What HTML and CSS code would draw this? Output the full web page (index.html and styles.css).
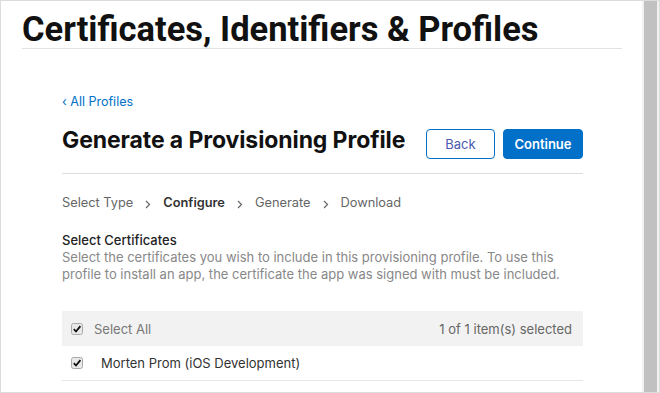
FILE: index.html
```html
<!DOCTYPE html>
<html>
<head>
<meta charset="utf-8">
<link rel="stylesheet" href="styles.css">
</head>
<body>
<div class="frame">
  <div class="page">
    <header class="top">
      <h1 class="title">Certificates, Identifiers &amp; Profiles</h1>
    </header>
    <main class="content">
      <a class="backlink" href="#">&lsaquo; All Profiles</a>
      <div class="titlebar">
        <h2 class="subtitle">Generate a Provisioning Profile</h2>
        <div class="actions">
          <button class="btn btn-outline">Back</button>
          <button class="btn btn-primary">Continue</button>
        </div>
      </div>
      <nav class="steps">
        <span class="step">Select Type</span>
        <svg class="chev" width="6" height="9" viewBox="0 0 6 9"><path d="M1 1l3.5 3.5L1 8" fill="none" stroke="#666" stroke-width="1.2"/></svg>
        <span class="step current">Configure</span>
        <svg class="chev" width="6" height="9" viewBox="0 0 6 9"><path d="M1 1l3.5 3.5L1 8" fill="none" stroke="#666" stroke-width="1.2"/></svg>
        <span class="step">Generate</span>
        <svg class="chev" width="6" height="9" viewBox="0 0 6 9"><path d="M1 1l3.5 3.5L1 8" fill="none" stroke="#666" stroke-width="1.2"/></svg>
        <span class="step">Download</span>
      </nav>
      <section class="section">
        <h3 class="section-title">Select Certificates</h3>
        <p class="section-desc">Select the certificates you wish to include in this provisioning profile. To use this profile to install an app, the certificate the app was signed with must be included.</p>
      </section>
      <div class="table">
        <div class="thead">
          <label class="check-label">
            <svg class="cbox" width="12" height="12" viewBox="0 0 12 12"><rect x="0.5" y="0.5" width="11" height="11" rx="2" fill="#e9e9e9" stroke="#a9a9a9"/><path d="M2.8 6.2l2.2 2.3 4.4-5.4" fill="none" stroke="#111" stroke-width="1.8"/></svg>
            <span class="muted">Select All</span>
          </label>
          <span class="count">1 of 1 item(s) selected</span>
        </div>
        <div class="row">
          <svg class="cbox" width="12" height="12" viewBox="0 0 12 12"><rect x="0.5" y="0.5" width="11" height="11" rx="2" fill="#e9e9e9" stroke="#a9a9a9"/><path d="M2.8 6.2l2.2 2.3 4.4-5.4" fill="none" stroke="#111" stroke-width="1.8"/></svg>
          <span class="row-name">Morten Prom (iOS Development)</span>
        </div>
      </div>
    </main>
  </div>
  <div class="scrollbar"><div class="thumb"></div></div>
</div>
</body>
</html>
```
FILE: styles.css
```css
* { box-sizing: border-box; }
html, body { margin: 0; padding: 0; background: #fff; }
body { font-family: Inter, "Noto Sans", sans-serif; color: #333; }
.frame {
  width: 660px;
  height: 393px;
  border: 1px solid #dcdcdc;
  display: flex;
  overflow: hidden;
}
.page { flex: 1; padding: 0 20px 0 21px; }
.top { border-bottom: 1px solid #e3e3e3; padding: 11px 0 2px; }
.title {
  margin: 0;
  font-family: Roboto, sans-serif;
  font-weight: 700;
  font-size: 34.5px;
  line-height: 34px;
  letter-spacing: 0;
  color: #111;
}
.content { padding: 0 39px 0 40px; }
.backlink {
  display: block;
  margin-top: 45px;
  font-size: 12.5px;
  line-height: 16px;
  color: #0070c9;
  text-decoration: none;
}
.titlebar {
  display: flex;
  align-items: flex-start;
  justify-content: space-between;
  margin-top: 15px;
  padding-bottom: 14px;
  border-bottom: 1px solid #dedede;
}
.subtitle {
  margin: 0;
  font-size: 23px;
  line-height: 30px;
  font-weight: 700;
  letter-spacing: -0.1px;
  color: #111;
}
.actions { display: flex; gap: 8px; margin-top: 4px; }
.btn {
  height: 30px;
  border-radius: 4px;
  font-family: Inter, sans-serif;
  font-size: 13px;
  padding: 0;
}
.btn-outline { width: 69px; border: 1px solid #0070c9; background: #fff; color: #4a5ab0; }
.btn-primary { width: 80px; border: 1px solid #0070c9; background: #0070c9; color: #fff; font-weight: 600; }
.steps {
  display: flex;
  align-items: center;
  gap: 12px;
  margin-top: 21px;
  font-size: 12.8px;
  line-height: 16px;
  color: #666;
}
.chev { margin-top: 3px; }
.step.current { font-weight: 600; color: #333; }
.section { margin-top: 21px; }
.section-title { margin: 0; font-size: 13px; font-weight: 500; line-height: 17px; color: #222; }
.section-desc { margin: 0; font-size: 13px; line-height: 17px; color: #888; }
.table { margin-top: 28px; }
.thead {
  display: flex;
  align-items: center;
  justify-content: space-between;
  height: 35px;
  background: #f2f2f2;
  padding: 0 11px 0 9px;
  font-size: 13px;
}
.check-label { display: flex; align-items: center; gap: 11px; }
.muted { color: #777; }
.count { color: #666; }
.row {
  display: flex;
  align-items: center;
  gap: 18px;
  height: 35px;
  padding: 0 9px;
  border-bottom: 1px solid #e6e6e6;
  font-size: 13px;
}
.row-name { color: #333; }
.scrollbar {
  width: 17px;
  background: #f1f1f1;
  padding: 0 2px;
}
.thumb { height: 100%; background: #c1c1c1; }
```
